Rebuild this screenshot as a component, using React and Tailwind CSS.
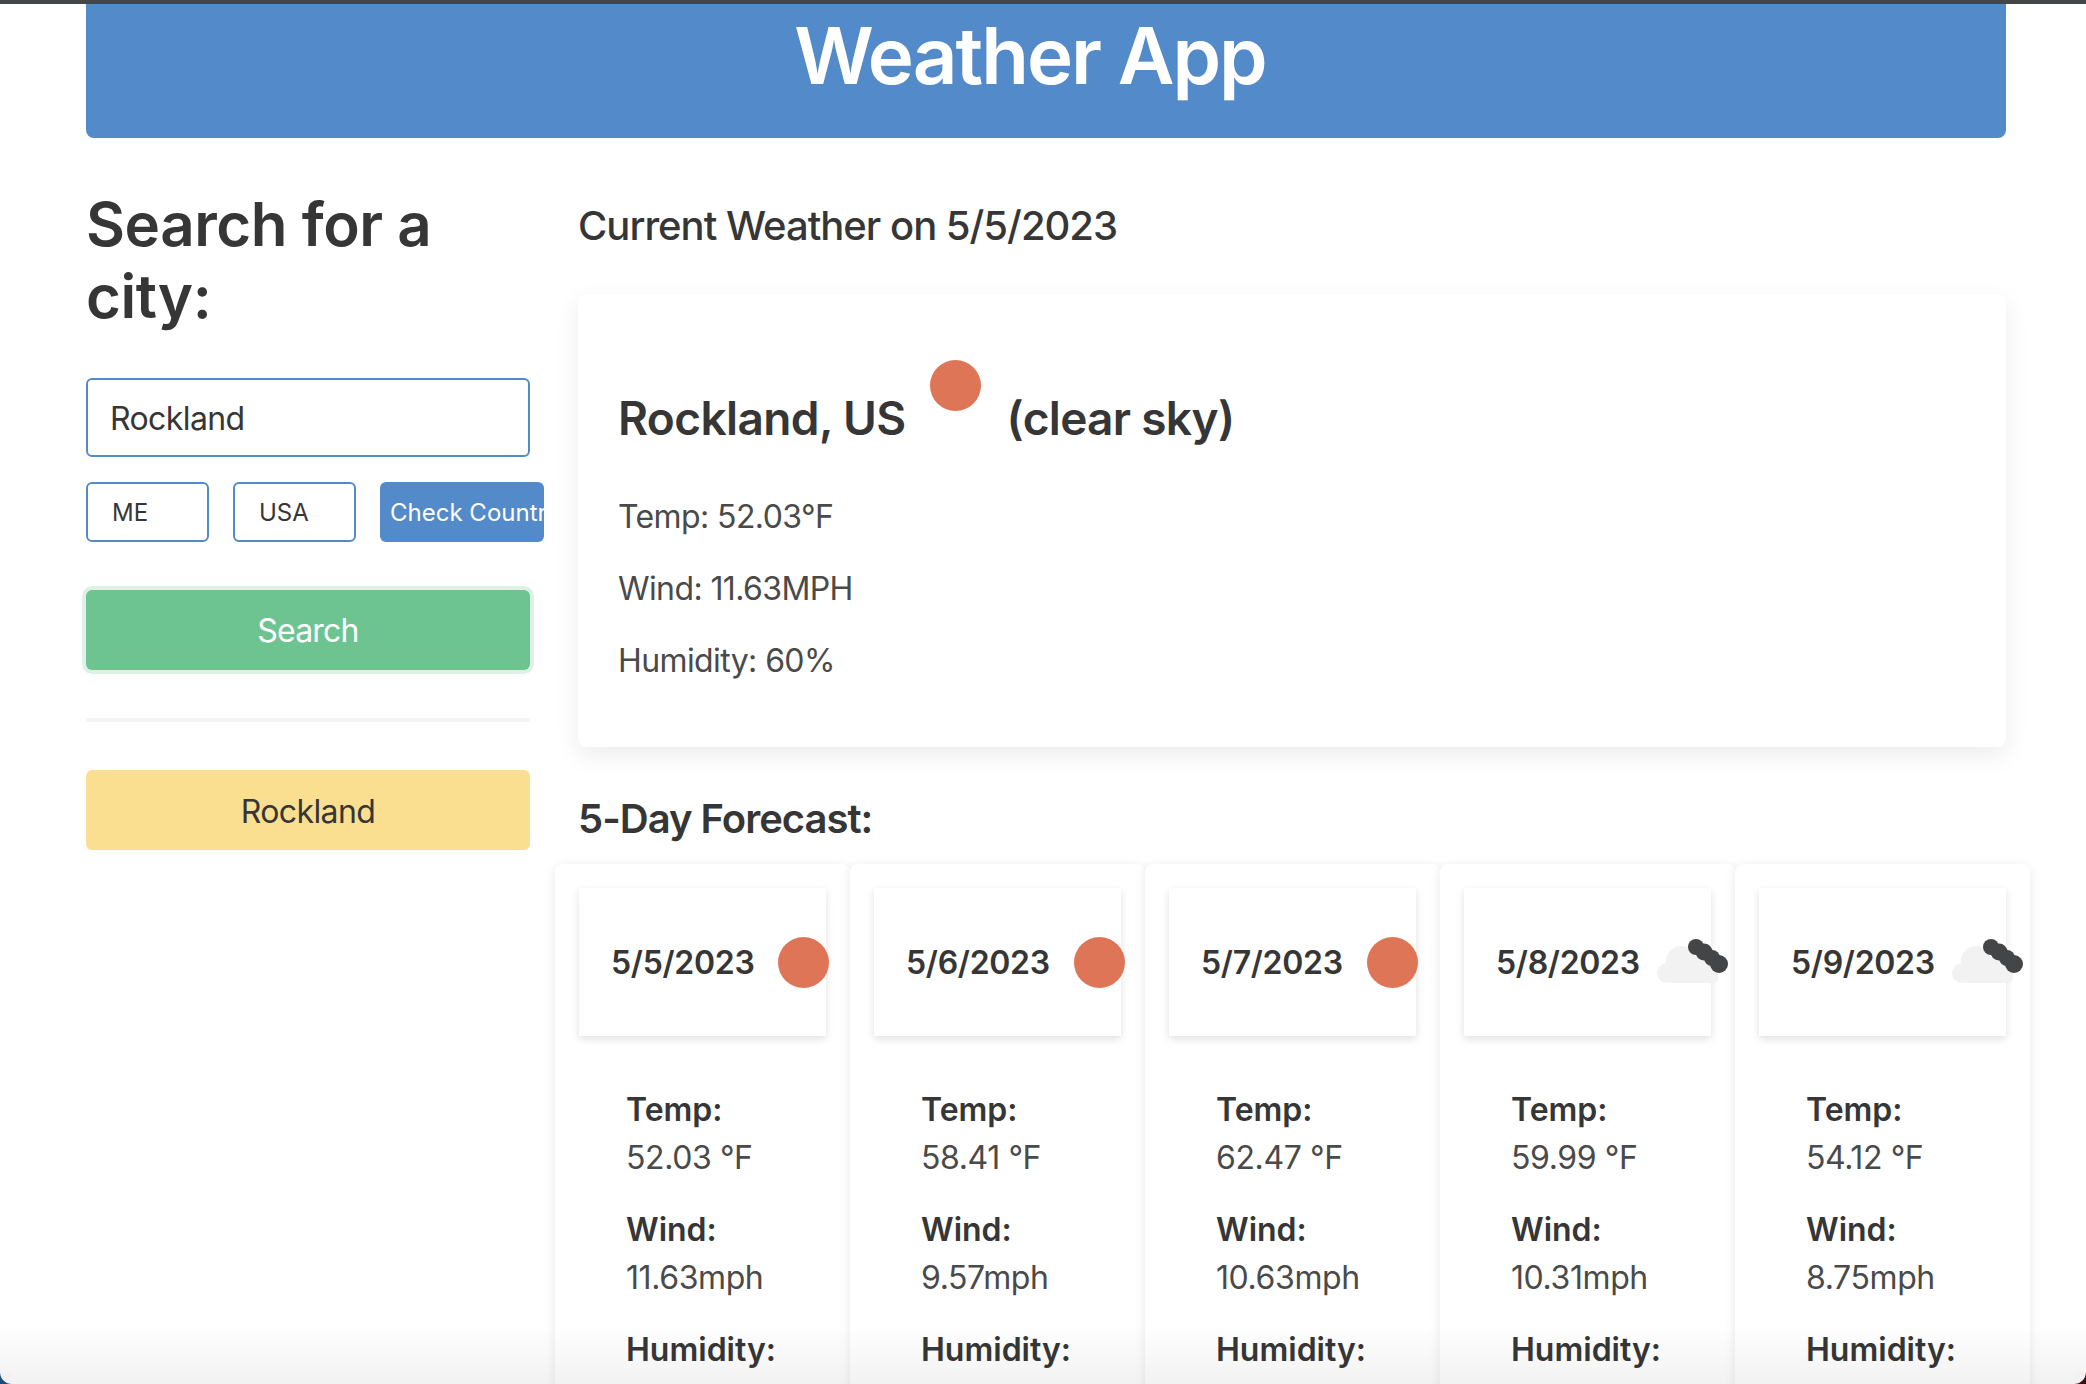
const font = { fontFamily: 'Inter, "Liberation Sans", sans-serif' };

function Sun({ className = "" }) {
  return <span className={`block w-[51px] h-[51px] rounded-full bg-[#dd7556] shrink-0 ${className}`} />;
}

function Cloud() {
  return (
    <svg viewBox="0 0 72 46" className="w-[72px] h-[46px] shrink-0 ml-[17px] overflow-visible">
      <g fill="#f2f2f2">
        <circle cx="10" cy="34" r="10" />
        <circle cx="24" cy="22" r="15" />
        <circle cx="46" cy="30" r="14" />
        <rect x="10" y="30" width="51" height="14" rx="5" />
      </g>
      <g fill="#444547">
        <circle cx="39" cy="8" r="8" />
        <circle cx="47" cy="13" r="8.5" />
        <circle cx="55" cy="19" r="8" />
        <circle cx="62" cy="25" r="9" />
      </g>
    </svg>
  );
}

function Row({ label, value }) {
  return (
    <div className="mb-[24px]">
      <div className="font-semibold text-[#363636] leading-[48px]">{label}</div>
      {value && <div className="text-[#4a4a4a] leading-[48px] tracking-[-0.4px]">{value}</div>}
    </div>
  );
}

function Day({ date, temp, wind, cloud }) {
  return (
    <div className="w-[295px] shrink-0 bg-white rounded-lg p-[24px] shadow-[0_2px_12px_rgba(0,0,0,0.09)]">
      <div className="h-[148px] bg-white shadow-[0_3px_8px_rgba(0,0,0,0.12)] flex items-center pl-[32px] whitespace-nowrap">
        <span className="text-[32px] font-semibold text-[#363636] tracking-[-0.3px] pt-[2px]">{date}</span>
        {cloud ? <Cloud /> : <Sun className="ml-[24px]" />}
      </div>
      <div className="pt-[50px] pl-[47px] pr-[48px] text-[32px]">
        <Row label="Temp:" value={temp} />
        <Row label="Wind:" value={wind} />
        <Row label="Humidity:" />
      </div>
    </div>
  );
}

export default function App() {
  return (
    <div className="relative h-[1384px] overflow-hidden bg-white" style={font}>
      <div className="h-[4px] bg-[#444547]" />
      <div className="pr-[80px] pl-[86px]">
        <header className="h-[134px] pr-[32px] bg-[#538ac9] rounded-b-lg text-center text-white text-[78px] font-semibold leading-[104px] tracking-[-2px]">
          Weather App
        </header>

        <div className="flex mt-[48px]">
          <aside className="w-[444px] shrink-0 pt-[2px]">
            <h2 className="text-[60px] leading-[72px] font-semibold text-[#363636] tracking-[-0.45px]">Search for a city:</h2>
            <div className="mt-[46px] h-[79px] border-2 border-[#538ac9] rounded-md flex items-center pl-[22px] pt-[2px] text-[32px] text-[#363636] tracking-[-0.6px]">Rockland</div>
            <div className="mt-[25px] flex h-[60px]">
              <div className="w-[123px] shrink-0 border-2 border-[#538ac9] rounded-md flex items-center pl-[24px] pt-[1px] text-[24px] text-[#363636]">ME</div>
              <div className="w-[123px] shrink-0 ml-[24px] border-2 border-[#538ac9] rounded-md flex items-center pl-[24px] pt-[1px] text-[24px] text-[#363636]">USA</div>
              <div className="w-[164px] shrink-0 ml-[24px] bg-[#538ac9] rounded-md flex items-center pl-[10px] pt-[1px] text-[24px] text-white overflow-hidden whitespace-nowrap">Check Country</div>
            </div>
            <div className="mt-[48px] h-[80px] bg-[#6ec491] rounded-md ring-4 ring-[#dff1e7] flex items-center justify-center pt-[2px] text-[32px] text-white tracking-[-0.8px]">Search</div>
            <div className="mt-[48px] h-[4px] bg-[#f5f5f5]" />
            <div className="mt-[48px] h-[80px] bg-[#fbdf91] rounded-md flex items-center justify-center pt-[4px] text-[32px] text-[#363636] tracking-[-0.6px]">Rockland</div>
          </aside>

          <main className="ml-[48px] w-[1428px] shrink-0">
            <h3 className="text-[40px] font-medium text-[#363636] leading-[48px] mt-[16px] tracking-[-1px]">Current Weather on 5/5/2023</h3>
            <section className="mt-[44px] h-[453px] rounded-lg bg-white shadow-[0_8px_24px_rgba(0,0,0,0.08)] px-[40px] pt-[92px]">
              <div className="flex items-start text-[#363636]">
                <span className="text-[46px] font-semibold leading-[64px] tracking-[-0.6px]">Rockland, US</span>
                <Sun className="ml-[24px] mt-[-26px]" />
                <span className="text-[46px] font-semibold leading-[64px] ml-[26px] tracking-[-0.7px]">(clear sky)</span>
              </div>
              <div className="mt-[43px] text-[32px] leading-[48px] text-[#4a4a4a] tracking-[-0.6px]">
                <p>Temp: 52.03°F</p>
                <p className="mt-[24px]">Wind: 11.63MPH</p>
                <p className="mt-[24px]">Humidity: 60%</p>
              </div>
            </section>
            <h3 className="text-[40px] font-semibold text-[#363636] leading-[48px] mt-[48px] tracking-[-1px]">5-Day Forecast:</h3>
            <div className="flex mt-[21px] ml-[-23px]">
              <Day date="5/5/2023" temp="52.03 °F" wind="11.63mph" />
              <Day date="5/6/2023" temp="58.41 °F" wind="9.57mph" />
              <Day date="5/7/2023" temp="62.47 °F" wind="10.63mph" />
              <Day date="5/8/2023" temp="59.99 °F" wind="10.31mph" cloud />
              <Day date="5/9/2023" temp="54.12 °F" wind="8.75mph" cloud />
            </div>
          </main>
        </div>
      </div>
      <div className="absolute inset-x-0 bottom-0 h-[60px] bg-gradient-to-b from-transparent to-[rgba(0,0,0,0.05)] pointer-events-none" />
      <div className="absolute left-0 bottom-0 w-[12px] h-[12px] bg-[#1d4b80] pointer-events-none">
        <div className="w-full h-full bg-[#f2f2f2] rounded-bl-[12px]" />
      </div>
      <div className="absolute right-0 bottom-0 w-[12px] h-[12px] bg-[#3b0d0d] pointer-events-none">
        <div className="w-full h-full bg-[#f2f2f2] rounded-br-[12px]" />
      </div>
    </div>
  );
}
